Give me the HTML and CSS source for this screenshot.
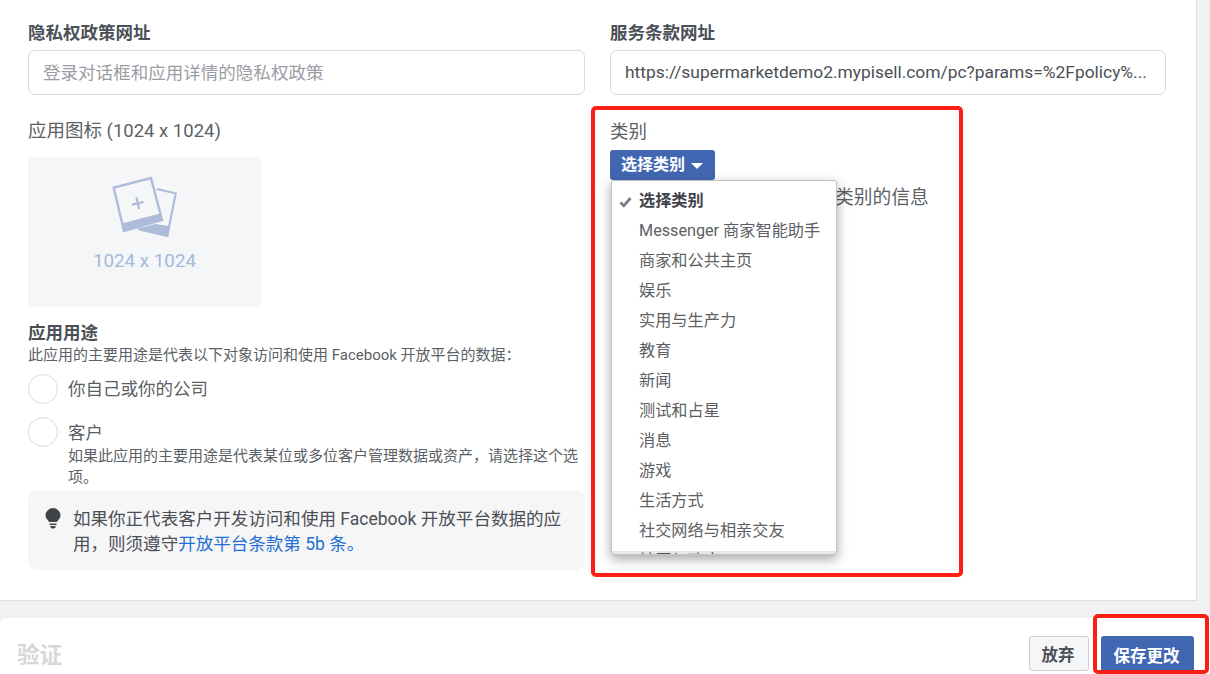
FILE: index.html
```html
<!DOCTYPE html>
<html lang="zh-CN">
<head>
<meta charset="utf-8">
<title>应用设置</title>
<link rel="stylesheet" href="styles.css">
</head>
<body>
<div class="page">
  <section class="card">
    <div class="grid">
      <div class="col">
        <label class="label-bold">隐私权政策网址</label>
        <div class="input placeholder">登录对话框和应用详情的隐私权政策</div>
        <div class="label-plain icon-label">应用图标 (1024 x 1024)</div>
        <div class="icon-box">
          <svg class="photo" width="72" height="65" viewBox="0 0 72 65">
            <path d="M47.7 14 66.700 18.3 58.300 61 29.300 54.300 49 50" fill="none" stroke="#aebcdb" stroke-width="2.2"/>
            <path d="M29.300 54.300 58.300 61 60 51 46 49Z" fill="#aebcdb"/>
            <path d="M4.700 12.700 42 3 53 45 15 56Z" fill="none" stroke="#aebcdb" stroke-width="2.400"/>
            <path d="M13.700 48.300 51 38.500 53 45 15 56Z" fill="#aebcdb"/>
            <path d="M23 29.600 34.600 26.900M27.500 22.400 30 34" fill="none" stroke="#aebcdb" stroke-width="2.200"/>
          </svg>
          <span class="icon-size">1024 x 1024</span>
        </div>
        <div class="label-bold purpose">应用用途</div>
        <p class="small">此应用的主要用途是代表以下对象访问和使用 Facebook 开放平台的数据：</p>
        <div class="radio-row first-radio">
          <span class="radio"></span>
          <span class="radio-text">你自己或你的公司</span>
        </div>
        <div class="radio-row second-radio">
          <span class="radio"></span>
          <div>
            <div class="radio-text client">客户</div>
            <p class="small desc">如果此应用的主要用途是代表某位或多位客户管理数据或资产，请选择这个选项。</p>
          </div>
        </div>
        <div class="tip">
          <svg class="bulb" width="18" height="22" viewBox="0 0 18 22">
            <path d="M9 1a7.500 7.500 0 0 0-7.500 7.500c0 3 2.500 4.100 3.500 6.500h8c1-2.400 3.500-3.500 3.500-6.500A7.500 7.500 0 0 0 9 1Z" fill="#3f434a"/>
            <path d="M5.500 16.500h7v1.500h-7zM6.500 19h5v1.500l-1.500 1h-2l-1.500-1z" fill="#3f434a"/>
          </svg>
          <p>如果你正代表客户开发访问和使用 Facebook 开放平台数据的应用，则须遵守<a href="#">开放平台条款第 5b 条。</a></p>
        </div>
      </div>
      <div class="col">
        <label class="label-bold">服务条款网址</label>
        <div class="input value">https://supermarketdemo2.mypisell.com/pc?params=%2Fpolicy%...</div>
        <div class="category">
          <div class="label-plain">类别</div>
          <button class="select-btn">选择类别<span class="caret"></span></button>
          <p class="category-note">查看有关如何选择合适应用类别的信息</p>
          <ul class="menu">
            <li class="selected">
              <svg class="check" width="13" height="12" viewBox="0 0 13 12"><path d="M1.500 6.500 4.800 9.800 11.500 2" fill="none" stroke="#7a7d83" stroke-width="2.800"/></svg>
              选择类别
            </li>
            <li>Messenger 商家智能助手</li>
            <li>商家和公共主页</li>
            <li>娱乐</li>
            <li>实用与生产力</li>
            <li>教育</li>
            <li>新闻</li>
            <li>测试和占星</li>
            <li>消息</li>
            <li>游戏</li>
            <li>生活方式</li>
            <li>社交网络与相亲交友</li>
            <li>社区与政府</li>
          </ul>
        </div>
      </div>
    </div>
  </section>
  <footer class="footer">
    <h2 class="footer-title">验证</h2>
    <div class="actions">
      <button class="btn-cancel">放弃</button>
      <button class="btn-save">保存更改</button>
    </div>
  </footer>
  <div class="mark mark-category"></div>
  <div class="mark mark-save"></div>
</div>
</body>
</html>
```
FILE: styles.css
```css
* { box-sizing: border-box; }
html, body { margin: 0; padding: 0; }
body {
  font-family: Roboto, "Noto Sans CJK SC", sans-serif;
  color: #4b4f56;
  background: #f1f1f2;
}
.page {
  position: relative;
  width: 1210px;
  height: 674px;
  overflow: hidden;
  display: flex;
  flex-direction: column;
}
.card {
  width: 1197px;
  height: 601px;
  flex: none;
  background: #fff;
  border-right: 1px solid #dddfe2;
  border-bottom: 1px solid #dddfe2;
  padding: 20px 30px 0 28px;
}
.grid {
  display: grid;
  grid-template-columns: 557px 556px;
  column-gap: 25px;
}
.col { min-width: 0; }
.label-bold {
  display: block;
  font-size: 17.500px;
  line-height: 26px;
  font-weight: 700;
}
.label-plain {
  font-size: 18.500px;
  line-height: 26px;
  color: #5b5f66;
}
.input {
  margin-top: 4px;
  height: 45px;
  border: 1px solid #d8dade;
  border-radius: 7px;
  padding: 0 14px;
  font-size: 17.550px;
  line-height: 44px;
  white-space: nowrap;
  overflow: hidden;
}
.placeholder { color: #9a9da3; }
.value { font-size: 17.400px; line-height: 43px; color: #4b4f56; }
.icon-label { margin-top: 23px; }
.icon-box {
  margin-top: 13px;
  width: 233px;
  height: 150px;
  background: #f5f6f8;
  display: flex;
  flex-direction: column;
  align-items: center;
  padding-top: 18px;
}
.photo { flex: none; }
.icon-size {
  margin-top: 8px;
  font-size: 18.800px;
  line-height: 26px;
  color: #a4b9dc;
}
.purpose { margin-top: 13px; }
.small {
  margin: -1px 0 0;
  font-size: 15px;
  line-height: 21px;
  color: #5b5f66;
}
.radio-row { display: flex; column-gap: 10px; }
.first-radio { margin-top: 8px; align-items: center; }
.second-radio { margin-top: 13px; }
.radio {
  flex: none;
  width: 30px;
  height: 30px;
  border-radius: 50%;
  border: 1px solid #d8dade;
  background: #fff;
}
.radio-text { font-size: 17.500px; line-height: 30px; color: #5b5f66; }
.client { padding-top: 1px; }
.desc { margin-top: -2px; }
.tip {
  margin-top: 2px;
  height: 80px;
  background: #f6f6f7;
  border-radius: 9px;
  padding: 17px 20px 0 16px;
  display: flex;
  column-gap: 11px;
}
.bulb { flex: none; margin-top: 0; }
.tip p {
  margin: 0;
  font-size: 17.550px;
  line-height: 25px;
  color: #4b4f56;
}
.tip a { color: #1f6fd6; text-decoration: none; }
.category { position: relative; margin-top: 24px; }
.select-btn {
  display: block;
  margin-top: 5px;
  width: 105px;
  height: 30px;
  border: 0;
  border-radius: 3px;
  background: #4267b2;
  color: #fff;
  font-family: inherit;
  font-size: 16px;
  font-weight: 700;
  text-align: left;
  padding: 0 0 0 11px;
  line-height: 30px;
}
.caret {
  display: inline-block;
  margin-left: 6px;
  vertical-align: middle;
  border-left: 6px solid transparent;
  border-right: 6px solid transparent;
  border-top: 6px solid #fff;
}
.category-note {
  margin: 4px 0 0;
  font-size: 18.750px;
  line-height: 28px;
  color: #5b5f66;
  white-space: nowrap;
}
.menu {
  position: absolute;
  left: 1px;
  top: 61px;
  width: 226px;
  height: 375px;
  margin: 0;
  padding: 5px 0 0;
  list-style: none;
  overflow: hidden;
  background: #fff;
  border: 1px solid #c2c4c8;
  border-radius: 3px;
  box-shadow: 0 4px 12px rgba(0, 0, 0, .36);
}
.menu::after {
  content: "";
  position: absolute;
  left: 0;
  right: 0;
  bottom: 0;
  height: 3px;
  background: rgba(0, 0, 0, .09);
}
.menu li {
  position: relative;
  height: 30px;
  padding-left: 27px;
  font-size: 16.200px;
  line-height: 30px;
  color: #5b5f66;
  white-space: nowrap;
}
.menu .selected { font-weight: 700; color: #3f434a; }
.check {
  position: absolute;
  left: 7px;
  top: 10px;
}
.footer {
  margin-top: 17px;
  flex: 1;
  background: #fff;
  border-radius: 6px 0 0 0;
  display: flex;
  justify-content: space-between;
  padding: 0 16px 0 17px;
}
.footer-title {
  margin: 22px 0 0;
  font-size: 22.500px;
  line-height: 30px;
  color: #d6d7d9;
  font-weight: 700;
}
.actions {
  display: flex;
  align-items: flex-start;
  column-gap: 12px;
  padding-top: 18px;
}
.actions button {
  font-family: inherit;
  font-size: 16.500px;
  font-weight: 700;
  border-radius: 3px;
  padding: 0 2px 0 0;
}
.btn-cancel {
  width: 60px;
  height: 35px;
  background: #f5f6f7;
  border: 1px solid #ccd0d5;
  color: #4b4f56;
}
.btn-save {
  width: 93px;
  height: 38px;
  background: #4267b2;
  border: 0;
  color: #fff;
}
.mark {
  position: absolute;
  border: 4px solid #fa1e14;
  border-radius: 5px;
  pointer-events: none;
}
.mark-category { left: 591px; top: 106px; width: 372px; height: 471px; }
.mark-save { left: 1093px; top: 614px; width: 116px; height: 60px; }
```
